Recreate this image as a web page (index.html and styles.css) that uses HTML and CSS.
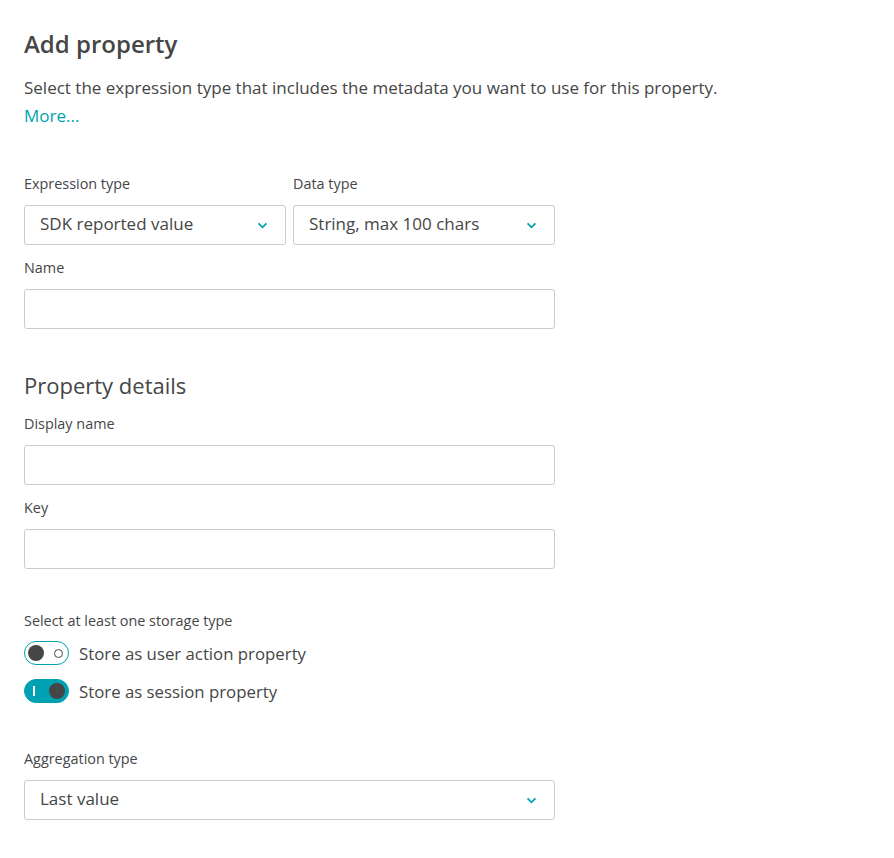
FILE: index.html
```html
<!DOCTYPE html>
<html lang="en">
<head>
<meta charset="utf-8">
<title>Add property</title>
<link rel="stylesheet" href="styles.css">
</head>
<body>
<main class="page">
  <h1 class="title">Add property</h1>
  <p class="desc">Select the expression type that includes the metadata you want to use for this property.</p>
  <a class="more" href="#">More...</a>

  <div class="row two">
    <div class="field">
      <label class="label">Expression type</label>
      <div class="select"><span>SDK reported value</span><svg class="chev" viewBox="0 0 12 8" width="11" height="7"><path d="M1.5 1.5 L6 6 L10.5 1.5" fill="none" stroke="#00a1b2" stroke-width="2"/></svg></div>
    </div>
    <div class="field">
      <label class="label">Data type</label>
      <div class="select"><span>String, max 100 chars</span><svg class="chev" viewBox="0 0 12 8" width="11" height="7"><path d="M1.5 1.5 L6 6 L10.5 1.5" fill="none" stroke="#00a1b2" stroke-width="2"/></svg></div>
    </div>
  </div>

  <div class="field wide">
    <label class="label">Name</label>
    <div class="input"></div>
  </div>

  <h2 class="subtitle">Property details</h2>

  <div class="field wide">
    <label class="label">Display name</label>
    <div class="input"></div>
  </div>
  <div class="field wide">
    <label class="label">Key</label>
    <div class="input"></div>
  </div>

  <div class="storage">
    <div class="label">Select at least one storage type</div>
    <div class="toggle-row">
      <span class="toggle off"><span class="knob"></span><span class="ring"></span></span>
      <span class="toggle-text">Store as user action property</span>
    </div>
    <div class="toggle-row">
      <span class="toggle on"><span class="bar"></span><span class="knob"></span></span>
      <span class="toggle-text">Store as session property</span>
    </div>
  </div>

  <div class="field wide agg">
    <label class="label">Aggregation type</label>
    <div class="select"><span>Last value</span><svg class="chev" viewBox="0 0 12 8" width="11" height="7"><path d="M1.5 1.5 L6 6 L10.5 1.5" fill="none" stroke="#00a1b2" stroke-width="2"/></svg></div>
  </div>
</main>
</body>
</html>
```
FILE: styles.css
```css
* { box-sizing: border-box; }
html, body { margin: 0; padding: 0; background: #fff; }
body {
  font-family: "Open Sans", "Noto Sans", sans-serif;
  color: #454646;
}
.page {
  padding: 26px 24px 0 24px;
}
.title {
  margin: 0;
  font-size: 24px;
  line-height: 36px;
  font-weight: 600;
}
.desc {
  margin: 12px 0 0 0;
  font-size: 17px;
  line-height: 28px;
}
.more {
  display: block;
  color: #00a1b2;
  text-decoration: none;
  font-size: 17px;
  line-height: 28px;
}
.row.two {
  display: flex;
  gap: 7px;
  margin-top: 44px;
  width: 531px;
}
.row.two .field { flex: 1; min-width: 0; }
.field { display: flex; flex-direction: column; }
.wide { width: 531px; margin-top: 13px; }
.label {
  font-size: 14.4px;
  line-height: 20px;
  margin-bottom: 11px;
  display: block;
}
.select, .input {
  height: 40px;
  border: 1px solid #cccccc;
  border-radius: 3px;
  background: #fff;
}
.select {
  display: flex;
  align-items: center;
  justify-content: space-between;
  padding: 0 17px 0 15px;
  font-size: 17px;
}
.select span { margin-bottom: 3px; }
.chev { margin-top: 1px; }
.subtitle {
  margin: 40px 0 0 0;
  font-size: 22px;
  line-height: 32px;
  font-weight: 400;
}
.storage { margin-top: 42px; }
.storage .label { margin-bottom: 10px; }
.toggle-row {
  display: flex;
  align-items: center;
  gap: 10px;
  height: 24px;
  margin-bottom: 14px;
}
.toggle {
  width: 45px;
  height: 24px;
  border-radius: 12px;
  border: 1.5px solid #00a1b2;
  display: flex;
  align-items: center;
  justify-content: space-between;
  padding: 0 5px 0 3px;
  flex-shrink: 0;
}
.toggle .knob {
  width: 16px;
  height: 16px;
  border-radius: 50%;
  background: #454646;
}
.toggle .ring {
  width: 9px;
  height: 9px;
  border-radius: 50%;
  border: 1.5px solid #454646;
}
.toggle.on {
  background: #00a1b2;
  padding: 0 3px 0 8px;
}
.toggle .bar {
  width: 1.5px;
  height: 10px;
  background: #fff;
}
.toggle-text { font-size: 16.8px; }
.agg { margin-top: 46px; }
```
